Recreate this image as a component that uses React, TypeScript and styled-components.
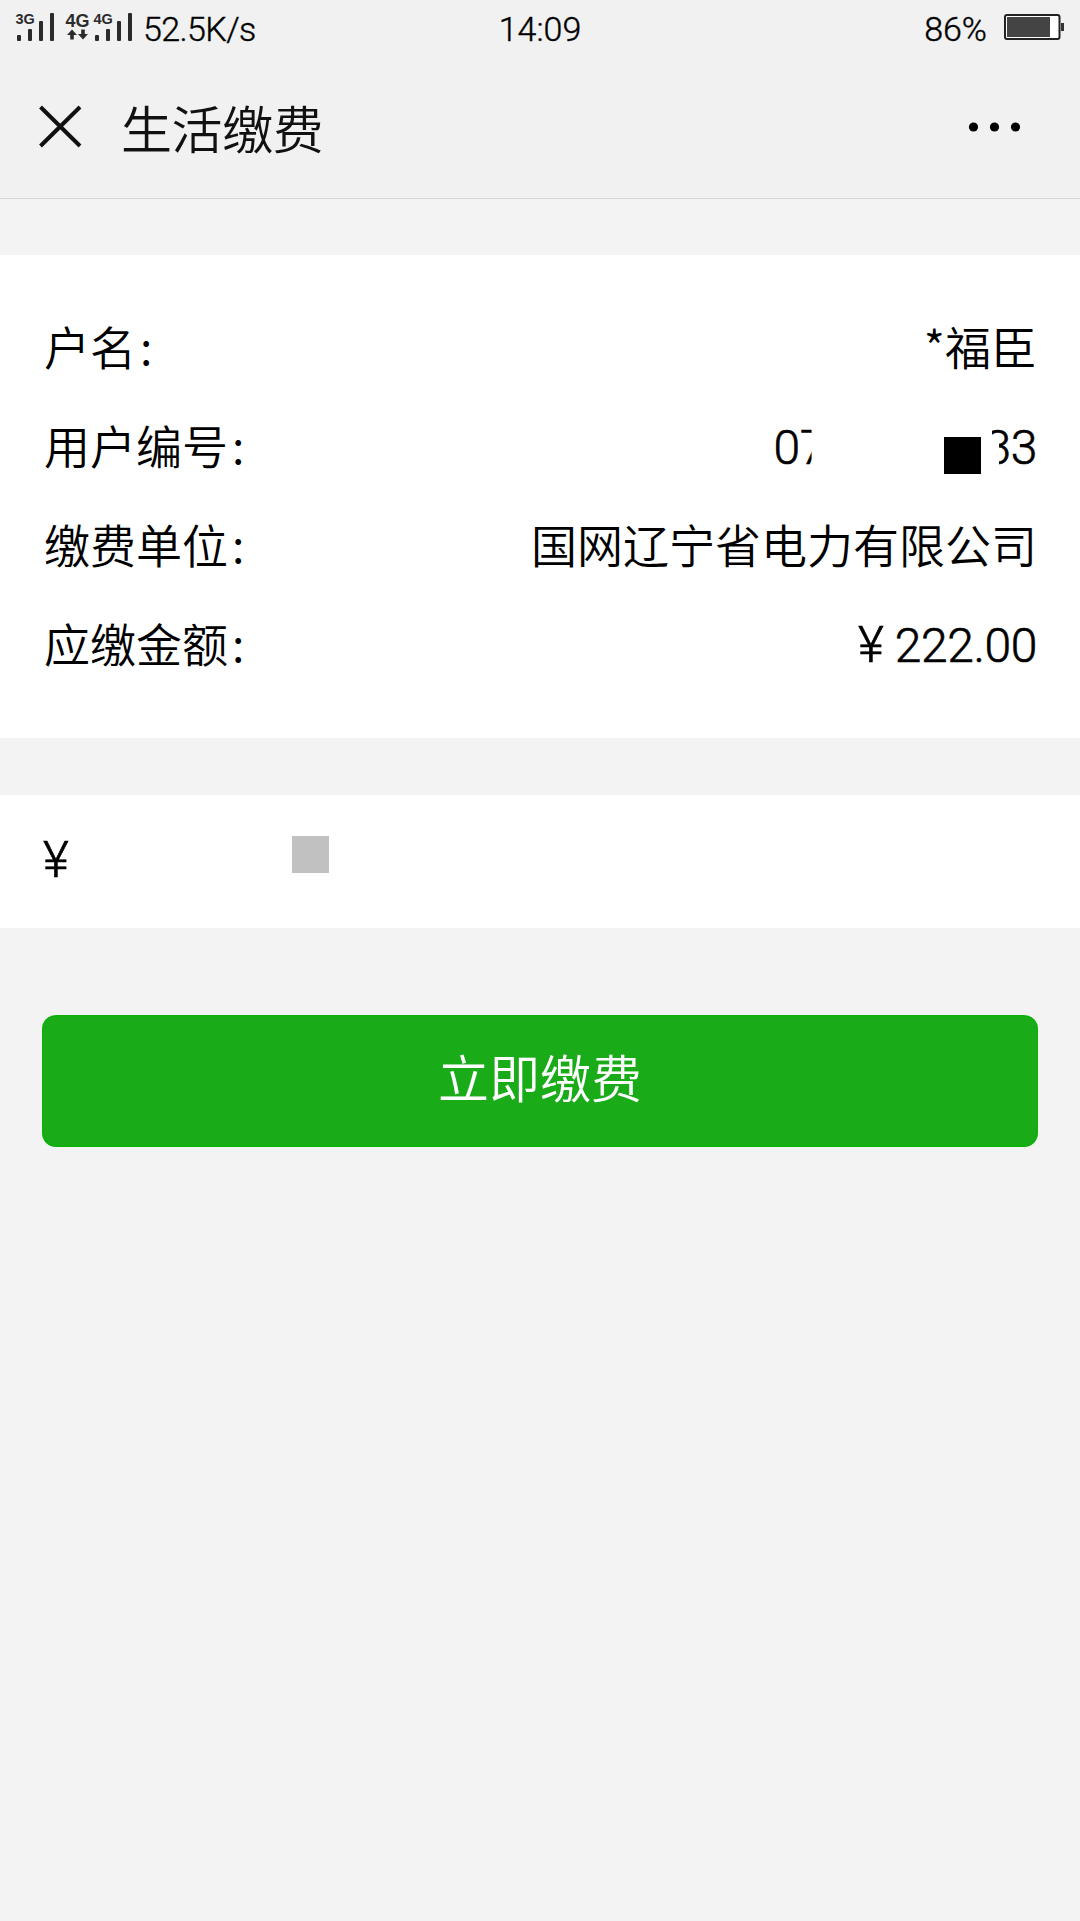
import React from "react";
import styled, { createGlobalStyle } from "styled-components";

const GlobalStyle = createGlobalStyle`
  *, *::before, *::after { box-sizing: border-box; }
  body {
    margin: 0;
    background: #f3f3f3;
    font-family: "Noto Sans CJK SC", "Noto Sans", sans-serif;
    font-weight: 350;
    color: #000;
  }
`;

const Page = styled.div`
  display: flex;
  flex-direction: column;
  width: 1080px;
  height: 1921px;
  background: #f3f3f3;
  overflow: hidden;
`;

const StatusBar = styled.header`
  display: grid;
  grid-template-columns: 1fr auto 1fr;
  height: 58px;
  padding: 0 14px 0 14px;
  background: #f1f1f1;
`;

const StatusGroup = styled.div<{ $end?: boolean }>`
  display: flex;
  justify-content: ${(p) => (p.$end ? "flex-end" : "flex-start")};
`;

const StatusText = styled.span<{ $spacing?: number }>`
  font-family: Roboto, "Noto Sans CJK SC", sans-serif;
  font-size: 34px;
  line-height: 56px;
  height: 58px;
  font-weight: 350;
  -webkit-text-stroke: 0.4px #000;
  letter-spacing: ${(p) => p.$spacing ?? 0}px;
  white-space: nowrap;
  padding-top: 1px;
`;

const SignalIcon = styled.svg`
  flex: none;
  width: 129px;
  height: 58px;
`;

const BatteryIcon = styled.svg`
  flex: none;
  width: 62px;
  height: 58px;
  margin-left: 17px;
`;

const TitleBar = styled.div`
  display: flex;
  align-items: center;
  height: 141px;
  padding: 0 54px 0 36px;
  background: #f1f1f1;
  border-bottom: 1px solid #d5d5d5;
`;

const CloseIcon = styled.svg`
  width: 50px;
  height: 50px;
  margin-bottom: 3px;
`;

const Title = styled.h1`
  flex: 1;
  margin: 0 0 2px 35px;
  font-size: 51px;
  line-height: 74px;
  font-weight: 350;
  letter-spacing: -0.4px;
  color: #111;
`;

const MoreIcon = styled.svg`
  width: 60px;
  height: 20px;
  margin-bottom: 2px;
`;

const Card = styled.section`
  margin-top: 56px;
  height: 483px;
  padding: 41px 43px 0;
  background: #fff;
`;

const Row = styled.div`
  display: flex;
  justify-content: space-between;
  height: 99px;
  line-height: 99px;
  font-size: 46px;
`;

const Label = styled.span`
  padding-left: 1px;
`;

const Colon = styled.span`
  margin-left: 4px;
`;

const Value = styled.span`
  white-space: nowrap;
`;

const digitFont = `
  font-family: Roboto, "Noto Sans CJK SC", sans-serif;
  font-size: 48px;
  font-weight: 300;
  line-height: 105px;
  letter-spacing: -0.4px;
  -webkit-text-stroke: 0.6px #000;
`;

const Digits = styled.span`
  ${digitFont}
`;

const MaskedNumber = styled.span`
  display: flex;
  ${digitFont}
`;

const LeadingDigits = styled.span`
  clip-path: polygon(0 0, 38px 0, 38px 100%, 0 100%);
`;

const TrailingDigits = styled.span`
  display: flex;
  justify-content: flex-end;
  width: 45px;
  clip-path: polygon(0 0, 100% 0, 100% 100%, 7px 100%, 7px 48px, 0 40px);
`;

const Block = styled.span<{ $color: string }>`
  flex: none;
  width: 37px;
  height: 37px;
  background: ${(p) => p.$color};
`;

const BlackBlock = styled(Block)`
  margin: 42px 11px 0 118px;
`;

const AmountField = styled.section`
  display: flex;
  margin-top: 57px;
  height: 133px;
  padding-left: 43px;
  background: #fff;
`;

const Yen = styled.span`
  font-size: 50px;
`;

const Currency = styled.span`
  ${digitFont}
  width: 249px;
  line-height: 131px;
`;

const GreyBlock = styled(Block)`
  margin-top: 41px;
`;

const PayButton = styled.button`
  margin: 87px 42px 0;
  height: 132px;
  padding: 0 0 10px;
  border: 2px solid #0eb00c;
  border-radius: 14px;
  background: #1aab19;
  color: #fff;
  font-family: inherit;
  font-size: 51px;
  font-weight: 350;
  line-height: 74px;
`;

const networkText = {
  fontFamily: '"Liberation Sans", Arial, sans-serif',
  fontWeight: 700,
  fill: "#2b2b2b",
};

const bars = [
  { x: 3, h: 6 },
  { x: 14, h: 12 },
  { x: 25, h: 20 },
  { x: 36, h: 28 },
];

function Bars({ left }: { left: number }) {
  return (
    <>
      {bars.map((b) => (
        <rect key={b.x} x={left + b.x} y={41 - b.h} width="4" height={b.h} rx="1" fill="#2b2b2b" />
      ))}
    </>
  );
}

function Signal() {
  return (
    <SignalIcon viewBox="0 0 129 58">
      <text x="1.5" y="24" fontSize="14.5" style={networkText}>3G</text>
      <Bars left={0} />
      <text x="51.5" y="27" fontSize="18" style={networkText}>4G</text>
      <path d="M58 29.5l5 5.5h-3.2v4.5h-3.6V35H53z" fill="#2b2b2b" />
      <path d="M69 39.5l5-5.5h-3.2v-4.5h-3.6v4.5H64z" fill="#2b2b2b" />
      <text x="79.5" y="24" fontSize="14.5" style={networkText}>4G</text>
      <Bars left={78} />
    </SignalIcon>
  );
}

function Battery() {
  return (
    <BatteryIcon viewBox="0 0 62 58">
      <rect x="1" y="15" width="54.5" height="24" rx="2" fill="#fff" stroke="#222" strokeWidth="2" />
      <rect x="3" y="17" width="43" height="20" fill="#444" />
      <rect x="57" y="23" width="3" height="8" fill="#333" />
    </BatteryIcon>
  );
}

export default function App() {
  return (
    <Page>
      <GlobalStyle />
      <StatusBar>
        <StatusGroup>
          <Signal />
          <StatusText $spacing={-0.6}>52.5K/s</StatusText>
        </StatusGroup>
        <StatusText>14:09</StatusText>
        <StatusGroup $end>
          <StatusText>86%</StatusText>
          <Battery />
        </StatusGroup>
      </StatusBar>

      <TitleBar>
        <CloseIcon viewBox="0 0 50 50">
          <path d="M4.5 5L44 44M44 5L4.5 44" stroke="#111" strokeWidth="4" fill="none" />
        </CloseIcon>
        <Title>生活缴费</Title>
        <MoreIcon viewBox="0 0 60 20">
          <circle cx="7.5" cy="10" r="4.6" />
          <circle cx="28.5" cy="10" r="4.6" />
          <circle cx="49.5" cy="10" r="4.6" />
        </MoreIcon>
      </TitleBar>

      <Card>
        <Row>
          <Label>户名<Colon>:</Colon></Label>
          <Value>*福臣</Value>
        </Row>
        <Row>
          <Label>用户编号<Colon>:</Colon></Label>
          <MaskedNumber>
            <LeadingDigits>07</LeadingDigits>
            <BlackBlock $color="#000" />
            <TrailingDigits>33</TrailingDigits>
          </MaskedNumber>
        </Row>
        <Row>
          <Label>缴费单位<Colon>:</Colon></Label>
          <Value>国网辽宁省电力有限公司</Value>
        </Row>
        <Row>
          <Label>应缴金额<Colon>:</Colon></Label>
          <Digits><Yen>¥</Yen> 222.00</Digits>
        </Row>
      </Card>

      <AmountField>
        <Currency><Yen>¥</Yen></Currency>
        <GreyBlock $color="#c1c1c1" />
      </AmountField>

      <PayButton type="button">立即缴费</PayButton>
    </Page>
  );
}
